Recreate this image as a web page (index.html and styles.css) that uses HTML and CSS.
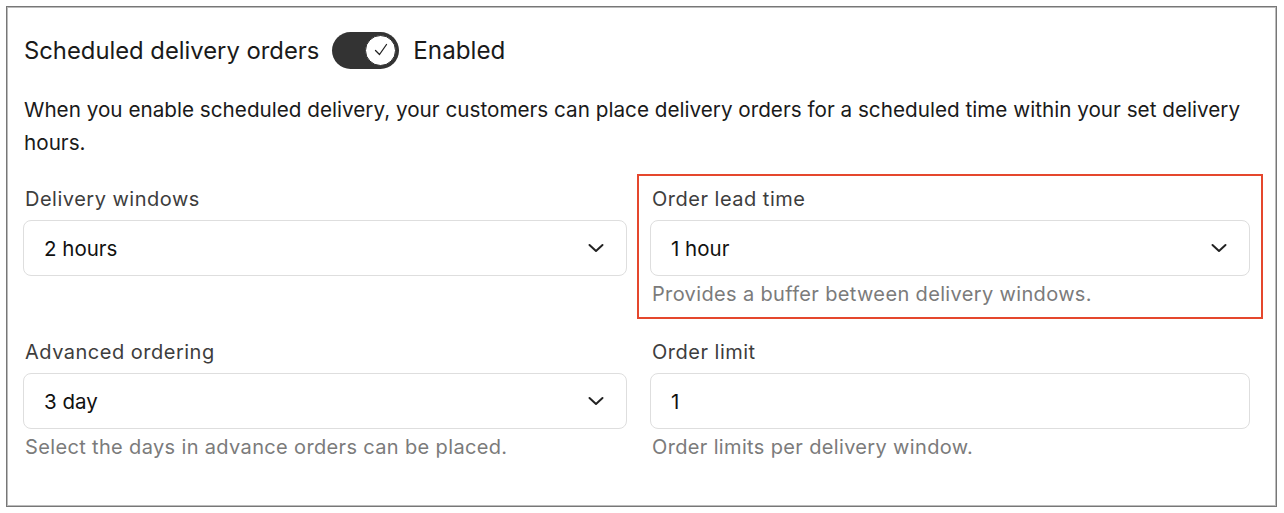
FILE: index.html
```html
<!DOCTYPE html>
<html lang="en">
    <head>
        <meta charset="UTF-8">
        <meta name="viewport" content="width=device-width, initial-scale=1.0">
        <title>Scheduled delivery</title>
        <link rel="stylesheet" href="styles.css">
    </head>
<body>
    <section class="panel">
        <div class="panel-head">
            <h1 class="panel-title">Scheduled delivery orders</h1>
            <span class="toggle">
                <span class="toggle-knob">
                    <svg width="18" height="18" viewBox="0 0 18 18"><path d="M3.5 9.5 L7.5 13.5 L14.5 3.5" fill="none" stroke="#222" stroke-width="1.3" stroke-linecap="round" stroke-linejoin="round"/></svg>
                </span>
            </span>
            <span class="toggle-label">Enabled</span>
        </div>
        <p class="intro">When you enable scheduled delivery, your customers can place delivery orders for a scheduled time within your set delivery hours.</p>

        <div class="fields">
            <div class="field">
                <label class="field-label">Delivery windows</label>
                <div class="select">
                    <span>2 hours</span>
                    <svg class="chev" width="16" height="10" viewBox="0 0 16 10"><path d="M1.5 2 L8 8 L14.5 2" fill="none" stroke="#222" stroke-width="2" stroke-linecap="round" stroke-linejoin="round"/></svg>
                </div>
            </div>
            <div class="field highlight">
                <label class="field-label">Order lead time</label>
                <div class="select">
                    <span>1 hour</span>
                    <svg class="chev" width="16" height="10" viewBox="0 0 16 10"><path d="M1.5 2 L8 8 L14.5 2" fill="none" stroke="#222" stroke-width="2" stroke-linecap="round" stroke-linejoin="round"/></svg>
                </div>
                <p class="hint">Provides a buffer between delivery windows.</p>
            </div>
            <div class="field">
                <label class="field-label">Advanced ordering</label>
                <div class="select">
                    <span>3 day</span>
                    <svg class="chev" width="16" height="10" viewBox="0 0 16 10"><path d="M1.5 2 L8 8 L14.5 2" fill="none" stroke="#222" stroke-width="2" stroke-linecap="round" stroke-linejoin="round"/></svg>
                </div>
                <p class="hint">Select the days in advance orders can be placed.</p>
            </div>
            <div class="field">
                <label class="field-label">Order limit</label>
                <div class="select">
                    <span>1</span>
                </div>
                <p class="hint">Order limits per delivery window.</p>
            </div>
        </div>
    </section>
</body>
</html>
```

FILE: styles.css
```css
body {
    margin: 6px;
    background-color: #ffffff;
    color: #1a1a1a;
    font-family: "Inter", "Noto Sans", sans-serif;
}

.panel {
    box-sizing: border-box;
    height: 501px;
    width: 1271px;
    border: 1px solid #777;
    box-shadow: inset 0 0 0 1px #bbb;
    padding: 23px 24px 0 16px;
}

.panel-head {
    display: flex;
    align-items: center;
    height: 40px;
    padding-left: 1px;
}

.panel-title {
    margin: 0;
    font-size: 23.8px;
    font-weight: 400;
    color: #1a1a1a;
}

.toggle {
    display: flex;
    align-items: center;
    justify-content: flex-end;
    box-sizing: border-box;
    width: 67px;
    height: 37px;
    margin: 0 14px 0 13px;
    padding: 3px;
    border-radius: 19px;
    background-color: #333;
}

.toggle-knob {
    display: flex;
    align-items: center;
    justify-content: center;
    box-sizing: border-box;
    width: 31px;
    height: 31px;
    border-radius: 50%;
    background-color: #fff;
    border: 1.5px solid #333;
}

.toggle-label {
    font-size: 24.2px;
    color: #1a1a1a;
}

.intro {
    margin: 23px 0 0;
    padding-left: 1px;
    font-size: 20.7px;
    line-height: 33px;
    color: #1a1a1a;
}

.fields {
    display: grid;
    grid-template-columns: 604px 600px;
    column-gap: 23px;
    row-gap: 34px;
    margin-top: 28px;
}

.field-label {
    display: block;
    padding-left: 2px;
    font-size: 20px;
    letter-spacing: 0.5px;
    line-height: 24px;
    color: #3d3d3d;
    margin-bottom: 9px;
}

.select {
    display: flex;
    align-items: center;
    justify-content: space-between;
    box-sizing: border-box;
    height: 56px;
    padding: 0 22px 0 20px;
    border: 1px solid #dedede;
    border-radius: 8px;
    font-size: 20.5px;
    color: #111;
}

.hint {
    margin: 6px 0 0;
    padding-left: 2px;
    font-size: 20px;
    letter-spacing: 0.35px;
    line-height: 24px;
    color: #7b7b7b;
}

.highlight {
    outline: 2px solid #e5472d;
    outline-offset: 11px;
}
```
